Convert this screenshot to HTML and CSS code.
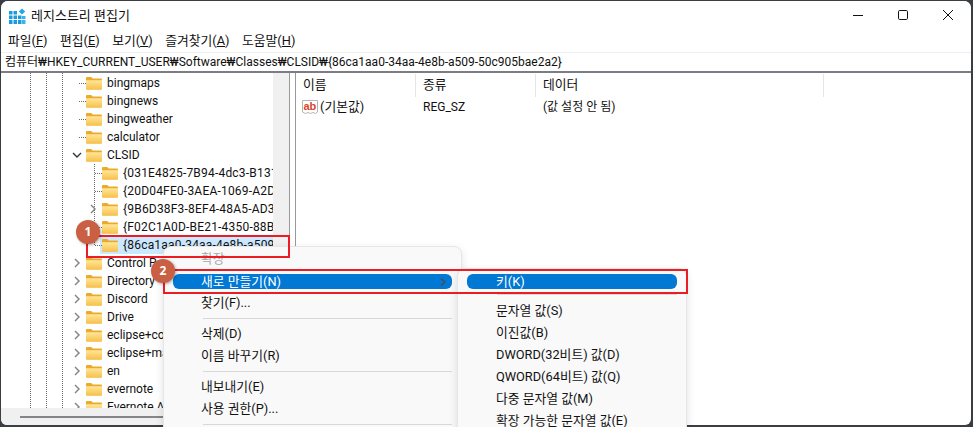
FILE: index.html
```html
<!DOCTYPE html>
<html lang="ko">
<head>
<meta charset="utf-8">
<title>레지스트리 편집기</title>
<link rel="stylesheet" href="styles.css">
</head>
<body>
<svg class="defs" width="0" height="0">
  <defs>
    <linearGradient id="fg" x1="0" y1="0" x2="0" y2="1">
      <stop offset="0" stop-color="#ffe79a"/>
      <stop offset="1" stop-color="#f7c04a"/>
    </linearGradient>
    <symbol id="folder" viewBox="0 0 16 14">
      <path d="M0 2.2C0 1.4.5 1 1.2 1h4l1.6 1.6h8C15.500 2.600 16 3 16 3.800V12.500c0 .7-.5 1.100-1.200 1.100H1.200C.5 13.600 0 13.200 0 12.500Z" fill="#eda92c"/>
      <path d="M0 4.200h16v8.300c0 .7-.5 1.100-1.200 1.100H1.200C.5 13.600 0 13.200 0 12.500Z" fill="url(#fg)"/>
    </symbol>
    <symbol id="chev-r" viewBox="0 0 8 10"><path d="M2 1l4 4-4 4" fill="none" stroke="#808080" stroke-width="1.400"/></symbol>
  </defs>
</svg>
<div class="window">
  <header class="title">
    <svg class="app-icon" width="17" height="17" viewBox="0 0 17 17">
      <path d="M0 3h3.500v3.500H0zM4.500 3H8v3.500H4.500zM0 7.500h3.500V11H0zM4.500 7.500H8V11H4.500zM9 7.500h3.500V11H9zM0 12h3.500v4H0zM4.500 12H8v4H4.500zM9 12h3.500v4H9z" fill="#1a9be0"/>
      <path d="M13 8h3.500v3H13zM13 12h3.500v4H13z" fill="#35b7ee"/>
      <path d="M13 0.500l3.200 3-3.200 3-3.200-3z" fill="#2aa5e6"/>
    </svg>
    <span class="title-text">레지스트리 편집기</span>
    <div class="win-btns">
      <svg width="12" height="12" viewBox="0 0 12 12"><path d="M1 6.500h10" stroke="#111" fill="none"/></svg>
      <svg width="12" height="12" viewBox="0 0 12 12"><rect x="1.500" y="1.500" width="9" height="9" rx="1.200" stroke="#111" fill="none"/></svg>
      <svg width="12" height="12" viewBox="0 0 12 12"><path d="M1 1l10 10M11 1L1 11" stroke="#111" fill="none"/></svg>
    </div>
  </header>
  <nav class="menu">
    <span>파일(<u>F</u>)</span><span>편집(<u>E</u>)</span><span>보기(<u>V</u>)</span><span>즐겨찾기(<u>A</u>)</span><span>도움말(<u>H</u>)</span>
  </nav>
  <div class="address">컴퓨터₩HKEY_CURRENT_USER₩Software₩Classes₩CLSID₩{86ca1aa0-34aa-4e8b-a509-50c905bae2a2}</div>
  <div class="panes">
    <section class="tree-pane">
      <div class="tree-top">
        <div class="tree">
          <div class="row l1"><i class="stub"></i><svg class="folder"><use href="#folder"/></svg><span>bingmaps</span></div>
          <div class="row l1"><i class="stub"></i><svg class="folder"><use href="#folder"/></svg><span>bingnews</span></div>
          <div class="row l1"><i class="stub"></i><svg class="folder"><use href="#folder"/></svg><span>bingweather</span></div>
          <div class="row l1"><i class="stub"></i><svg class="folder"><use href="#folder"/></svg><span>calculator</span></div>
          <div class="row l1"><svg class="chev" viewBox="0 0 10 8"><path d="M1 2l4 4 4-4" fill="none" stroke="#333" stroke-width="1.400"/></svg><svg class="folder"><use href="#folder"/></svg><span>CLSID</span></div>
          <div class="row l2 guide"><i class="stub"></i><svg class="folder"><use href="#folder"/></svg><span>{031E4825-7B94-4dc3-B131-E946B44C8DD5}</span></div>
          <div class="row l2 guide"><i class="stub"></i><svg class="folder"><use href="#folder"/></svg><span>{20D04FE0-3AEA-1069-A2D8-08002B30309D}</span></div>
          <div class="row l2 guide"><svg class="chev-r"><use href="#chev-r"/></svg><svg class="folder"><use href="#folder"/></svg><span>{9B6D38F3-8EF4-48A5-AD30-FFDFFCF37B05}</span></div>
          <div class="row l2 guide"><i class="stub"></i><svg class="folder"><use href="#folder"/></svg><span>{F02C1A0D-BE21-4350-88B0-7367FC96EF3C}</span></div>
          <div class="row l2 selected"><i class="stub"></i><svg class="folder"><use href="#folder"/></svg><span>{86ca1aa0-34aa-4e8b-a509-50c905bae2a2}</span></div>
          <div class="row l1"><svg class="chev-r"><use href="#chev-r"/></svg><svg class="folder"><use href="#folder"/></svg><span>Control Panel</span></div>
          <div class="row l1"><svg class="chev-r"><use href="#chev-r"/></svg><svg class="folder"><use href="#folder"/></svg><span>Directory</span></div>
          <div class="row l1"><svg class="chev-r"><use href="#chev-r"/></svg><svg class="folder"><use href="#folder"/></svg><span>Discord</span></div>
          <div class="row l1"><svg class="chev-r"><use href="#chev-r"/></svg><svg class="folder"><use href="#folder"/></svg><span>Drive</span></div>
          <div class="row l1"><svg class="chev-r"><use href="#chev-r"/></svg><svg class="folder"><use href="#folder"/></svg><span>eclipse+core</span></div>
          <div class="row l1"><svg class="chev-r"><use href="#chev-r"/></svg><svg class="folder"><use href="#folder"/></svg><span>eclipse+markers</span></div>
          <div class="row l1"><svg class="chev-r"><use href="#chev-r"/></svg><svg class="folder"><use href="#folder"/></svg><span>en</span></div>
          <div class="row l1"><svg class="chev-r"><use href="#chev-r"/></svg><svg class="folder"><use href="#folder"/></svg><span>evernote</span></div>
          <div class="row l1"><svg class="chev-r"><use href="#chev-r"/></svg><svg class="folder"><use href="#folder"/></svg><span>Evernote Application</span></div>
        </div>
        <div class="vscroll"></div>
      </div>
      <div class="hscroll"><div class="hthumb"></div></div>
    </section>
    <div class="splitter"></div>
    <section class="list">
      <div class="list-head"><div class="col">이름</div><div class="col">종류</div><div class="col">데이터</div></div>
      <div class="list-row">
        <div class="cell first">
          <svg width="17" height="16" viewBox="0 0 17 16"><path d="M.5 1.500h15v11.500l-2 1.500-2.500-1-2.500 1-2.500-1-2.500 1-3-1.500z" fill="#fff" stroke="#b5b5b5"/><text x="1.500" y="10.500" class="ab">ab</text></svg>
          <span class="cell-name">(기본값)</span>
        </div>
        <div class="cell">REG_SZ</div>
        <div class="cell">(값 설정 안 됨)</div>
      </div>
    </section>
  </div>
</div>

<div class="ctx ctx-main">
  <div class="item disabled">확장</div>
  <div class="item active">새로 만들기(N)<svg class="arrow" width="6" height="8" viewBox="0 0 6 8"><path d="M1 .5L5 4 1 7.500" fill="none" stroke="#4a4a4a" stroke-width="1.200"/></svg></div>
  <div class="item">찾기(F)...</div>
  <div class="sep"></div>
  <div class="item">삭제(D)</div>
  <div class="item">이름 바꾸기(R)</div>
  <div class="sep"></div>
  <div class="item">내보내기(E)</div>
  <div class="item">사용 권한(P)...</div>
  <div class="sep"></div>
</div>
<div class="ctx ctx-sub">
  <div class="item active">키(K)</div>
  <div class="sep"></div>
  <div class="item">문자열 값(S)</div>
  <div class="item">이진값(B)</div>
  <div class="item">DWORD(32비트) 값(D)</div>
  <div class="item">QWORD(64비트) 값(Q)</div>
  <div class="item">다중 문자열 값(M)</div>
  <div class="item">확장 가능한 문자열 값(E)</div>
</div>
<div class="redbox box-a"></div>
<div class="redbox box-b"></div>
<div class="badge badge-a">1</div>
<div class="badge badge-b">2</div>
</body>
</html>
```
FILE: styles.css
```css
* { box-sizing: border-box; }
html, body { margin: 0; height: 100%; }
body {
  position: relative;
  width: 973px;
  height: 427px;
  overflow: hidden;
  background: #3a3d42;
  font: 12px/18px Roboto, "Noto Sans CJK KR", sans-serif;
  color: #111;
}
.defs { position: absolute; }
.window {
  position: absolute;
  left: 1px;
  top: 1px;
  width: 970px;
  height: 424px;
  background: #fff;
  border-radius: 7px 7px 6px 6px;
  overflow: hidden;
  display: flex;
  flex-direction: column;
}
.title {
  height: 29px;
  flex: none;
  display: flex;
  align-items: center;
  padding-left: 8px;
  background: #fff;
}
.app-icon { margin-right: 5px; margin-top: 1px; }
.title-text { font-size: 13px; }
.win-btns {
  margin-left: auto;
  display: flex;
  gap: 33px;
  padding-right: 17px;
  margin-top: -2px;
}
.win-btns svg { display: block; }
.menu {
  height: 22px;
  flex: none;
  display: flex;
  align-items: center;
  gap: 12.500px;
  padding-left: 7px;
  font-size: 12.800px;
}
.address {
  height: 21px;
  flex: none;
  padding: 0 0 0 4px;
  line-height: 18px;
  border-top: 1px solid #efefef;
  border-bottom: 2px solid #7c7c84;
  white-space: nowrap;
}
.panes { flex: 1; display: flex; min-height: 0; }
.tree-pane {
  width: 289px;
  flex: none;
  display: flex;
  flex-direction: column;
  border-right: 1px solid #999;
  min-height: 0;
}
.tree-top { flex: 1; display: flex; min-height: 0; }
.tree {
  width: 272px;
  flex: none;
  overflow: hidden;
  padding-top: 1px;
  background-image:
    repeating-linear-gradient(to bottom, #6a6a6a 0 1px, transparent 1px 2px),
    repeating-linear-gradient(to bottom, #6a6a6a 0 1px, transparent 1px 2px),
    repeating-linear-gradient(to bottom, #6a6a6a 0 1px, transparent 1px 2px);
  background-size: 1px 100%;
  background-repeat: no-repeat;
  background-position: 29px 0, 45px 0, 61px 0;
}
.vscroll { flex: 1; background: #f0f0f0; }
.hscroll {
  height: 17px;
  flex: none;
  background: #f0f0f0;
  display: flex;
  align-items: center;
  padding-left: 19px;
}
.hthumb { width: 150px; height: 2px; background: #858585; }
.row {
  height: 18px;
  display: flex;
  align-items: center;
  white-space: nowrap;
}
.row.l1 { padding-left: 73px; }
.row.l2 { padding-left: 89px; letter-spacing: .2px; }
.row .stub {
  width: 7px;
  margin-left: 5px;
  height: 1px;
  background-image: repeating-linear-gradient(to right, #6a6a6a 0 1px, transparent 1px 2px);
  flex: none;
}
.row .chev { width: 10px; height: 8px; flex: none; margin: 0 4px 0 -2px; }
.row .chev-r { width: 8px; height: 10px; flex: none; margin: 0 5px 0 -1px; }
.row .folder { width: 16px; height: 14px; flex: none; }
.row span { margin-left: 5px; }
.row.guide {
  background-image: repeating-linear-gradient(to bottom, #6a6a6a 0 1px, transparent 1px 2px);
  background-size: 1px 100%;
  background-repeat: no-repeat;
  background-position: 93px 0;
}
.row.selected {
  background-image:
    linear-gradient(#cce8ff, #cce8ff),
    repeating-linear-gradient(to bottom, #6a6a6a 0 1px, transparent 1px 2px);
  background-size: 173px 100%, 1px 50%;
  background-repeat: no-repeat;
  background-position: 99px 0, 93px 0;
}
.splitter { width: 5px; flex: none; background: #fff; }
.list { flex: 1; border-left: 1px solid #999; min-width: 0; }
.list-head {
  height: 24px;
  display: grid;
  grid-template-columns: 120px 120px 288px;
  font-size: 12.800px;
}
.col {
  border-right: 1px solid #e5e5e5;
  padding: 2px 0 0 7px;
  margin-top: 1px;
}
.list-row {
  display: grid;
  grid-template-columns: 120px 120px 288px;
  height: 20px;
  align-items: center;
}
.cell { padding-left: 7px; }
.cell.first { padding-left: 6px; display: flex; align-items: center; gap: 1px; }
.cell-name { font-size: 12.800px; }
.ab { font: 700 11px "Liberation Sans", sans-serif; fill: #d8432a; }
.ctx {
  position: absolute;
  background: #f9f9f9;
  border: 1px solid #e6e6e6;
  border-radius: 8px;
  box-shadow: 0 3px 8px rgba(0,0,0,.12);
  font-size: 12.800px;
}
.ctx-main {
  left: 163px;
  top: 246px;
  width: 299px;
  height: 200px;
  padding: 1px 9px 0;
}
.ctx-sub {
  left: 457px;
  top: 268px;
  width: 230px;
  height: 180px;
  padding: 5px 9px 0;
}
.item {
  height: 22px;
  line-height: 22px;
  padding-left: 28px;
  position: relative;
  white-space: nowrap;
}
.ctx-sub .item { padding-left: 29px; }
.item.disabled { color: #a8a8a8; }
.item.active {
  height: 15px;
  line-height: 15px;
  margin: 4px 0 3px;
  background: #0078d4;
  color: #fff;
  border-radius: 6px;
}
.ctx-sub .item.active { margin-top: 0; }
.arrow { position: absolute; right: 6px; top: 4px; }
.sep { height: 1px; background: #d8d8d8; margin: 4px 0 4px 30px; }
.ctx-sub .sep { margin: 5px 0 5px 30px; }
.redbox {
  position: absolute;
  border: 2px solid #ec1c24;
  pointer-events: none;
}
.box-a { left: 86px; top: 235px; width: 204px; height: 23px; }
.box-b { left: 163px; top: 269px; width: 525px; height: 25px; }
.badge {
  position: absolute;
  width: 24px;
  height: 24px;
  border-radius: 50%;
  background: #c95f43;
  color: #fff;
  font: 700 12px/24px "Noto Sans", sans-serif;
  text-align: center;
  box-shadow: 1px 1px 3px rgba(0,0,0,.35);
}
.badge-a { left: 76px; top: 220px; }
.badge-b { left: 151px; top: 259px; }
```
